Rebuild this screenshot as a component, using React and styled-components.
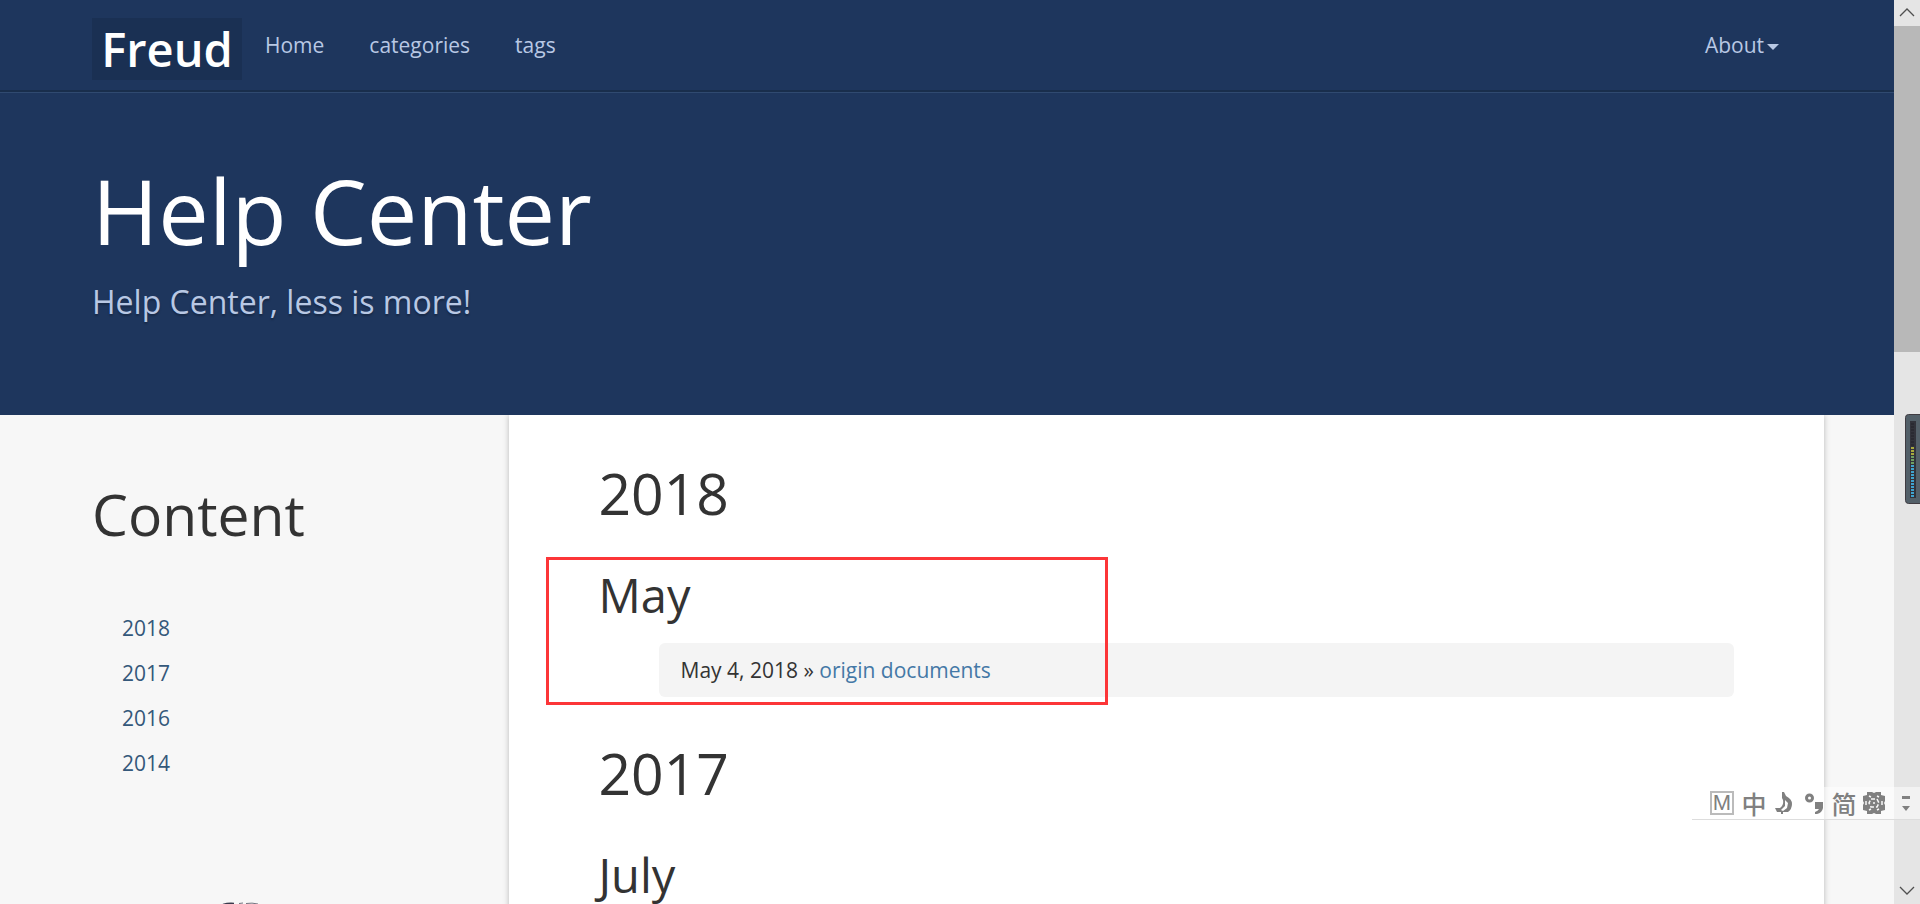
import React from "react";
import styled, { createGlobalStyle } from "styled-components";

const Global = createGlobalStyle`
  * { box-sizing: border-box; }
  body { margin: 0; background: #f7f7f7; color: #333; font: 21px/30px "Open Sans", "Noto Sans CJK SC", sans-serif; overflow: hidden; }
  h1, h2, h3, p, ul { margin: 0; padding: 0; font-weight: 400; }
  ul { list-style: none; }
  a { text-decoration: none; }
`;

const Shell = styled.div`
  position: relative;
  display: flex;
  height: 100vh;
  overflow: hidden;
`;
const Page = styled.div`
  flex: 1;
  min-width: 0;
  overflow: hidden;
`;
const Container = styled.div`
  max-width: 1754px;
  margin: 0 auto;
  padding: ${(p) => (p.$flush ? "0" : "0 22px")};
`;
const Top = styled.header`
  position: relative;
  z-index: 1;
  padding-bottom: 90px;
  background: #1e365d;
`;
const NavBar = styled.nav`
  border-bottom: 1px solid #304a70;
  box-shadow: inset 0 -2px 0 #192e4c;
`;
const NavRow = styled(Container)`
  display: flex;
  align-items: flex-start;
  padding-bottom: 12px;
`;
const Logo = styled.a`
  width: 150px;
  height: 62px;
  margin-top: 18px;
  background: #1a3053;
  color: #fff;
  font-weight: 600;
  font-size: 47px;
  line-height: 62px;
  text-align: center;
`;
const NavLink = styled.a`
  padding: 30px 22px 0 23px;
  color: #b8c8e4;
`;
const Menu = styled.button`
  display: flex;
  align-items: center;
  margin-left: auto;
  padding: 30px 23px 0;
  border: 0;
  background: none;
  color: #b8c8e4;
  font: inherit;
`;
const Caret = styled.span`
  margin: 4px 0 0 3px;
  border: 6px solid transparent;
  border-top-color: currentColor;
  border-bottom: 0;
`;
const Title = styled.h1`
  padding-top: 72px;
  color: #fff;
  font-size: 90px;
  line-height: 90px;
`;
const Lead = styled.p`
  padding-top: 24px;
  color: #b8c8e4;
  font-size: 32px;
  line-height: 46px;
  text-shadow: 0 2px 2px rgba(0, 0, 0, 0.25);
`;
const Columns = styled(Container)`
  display: grid;
  grid-template-columns: 1fr 3fr;
`;
const Sidebar = styled.aside`
  padding: 63px 22px 0;
`;
const Heading = styled.h2`
  font-size: 57px;
  line-height: 72px;
`;
const Years = styled.ul`
  padding: 56px 0 0 30px;
`;
const YearLink = styled.a`
  display: block;
  color: #34587a;
  line-height: 45px;
`;
const Portrait = styled.svg`
  display: block;
  margin: 116px 0 0 128px;
`;
const Main = styled.main`
  padding: 42px 90px 90px;
  background: #fff;
  box-shadow: 0 0 6px rgba(0, 0, 0, 0.25);
`;
const Month = styled.h3`
  padding-top: 36px;
  font-size: 47px;
  line-height: 60px;
`;
const Marked = styled.section`
  position: relative;
`;
const Outline = styled.span`
  position: absolute;
  top: 28px;
  left: -53px;
  width: 562px;
  height: 148px;
  border: 3px solid #fc3538;
`;
const Entry = styled.p`
  margin: 18px 0 40px 60px;
  padding: 12px 22px;
  border-radius: 6px;
  background: #f4f4f4;
  a { color: #4478a6; }
`;
const ScrollBar = styled.div`
  display: flex;
  flex-direction: column;
  justify-content: space-between;
  width: 26px;
  background: #e5e5e5;
`;
const Thumb = styled.div`
  height: 326px;
  background: #b8b8b8;
`;
const Arrow = styled.svg`
  display: block;
  width: 26px;
  height: 26px;
  fill: none;
  stroke: #505050;
  stroke-width: 1.3;
`;
const Meter = styled.svg`
  position: absolute;
  right: 0;
  top: 414px;
`;
const InputBar = styled.div`
  position: absolute;
  z-index: 2;
  right: 0;
  bottom: 84px;
  display: flex;
  width: 228px;
  height: 33px;
  padding-left: 6px;
  background: rgba(255, 255, 255, 0.5);
  border-bottom: 1px solid #ddd;
`;
const Grip = styled.span`
  width: 3px;
  margin: 2px 7px 0 0;
  background: repeating-linear-gradient(#d8d8d8 0 3px, transparent 3px 6px);
`;
const Tool = styled.button`
  display: flex;
  flex: none;
  align-items: center;
  justify-content: center;
  width: ${(p) => p.$width || 30}px;
  padding: 0;
  border: 0;
  background: none;
  color: #808080;
  font: 500 25px/32px "Noto Sans CJK SC", sans-serif;
`;
const Boxed = styled.span`
  width: 24px;
  height: 24px;
  border: 2px solid #bbb;
  font: 22px/20px "Liberation Sans", sans-serif;
`;

const YEARS = ["2018", "2017", "2016", "2014"];
const lamp = (i) => (i < 8 ? "#2a2a32" : i < 11 ? "#a9a93c" : i < 14 ? "#6f9f62" : "#3fa3cf");

export default function App() {
  return (
    <Shell>
      <Global />
      <Page>
        <Top>
          <NavBar>
            <NavRow>
              <Logo href="#">Freud</Logo>
              <NavLink href="#">Home</NavLink>
              <NavLink href="#">categories</NavLink>
              <NavLink href="#">tags</NavLink>
              <Menu>About<Caret /></Menu>
            </NavRow>
          </NavBar>
          <Container>
            <Title>Help Center</Title>
            <Lead>Help Center, less is more!</Lead>
          </Container>
        </Top>
        <Columns $flush>
          <Sidebar>
            <Heading>Content</Heading>
            <Years>
              {YEARS.map((y) => <li key={y}><YearLink href={"#" + y}>{y}</YearLink></li>)}
            </Years>
            <Portrait width="44" height="40" viewBox="0 0 44 40" fill="none" stroke="#3a3a4c">
              <path d="M3 2.500Q8 1 14 1.500" strokeWidth="1.500" />
              <path d="M19 1.500L23 1M26 1.500Q32 .5 38 2" strokeWidth="1" opacity=".7" />
            </Portrait>
          </Sidebar>
          <Main>
            <Heading>2018</Heading>
            <Marked>
              <Month>May</Month>
              <Entry>May 4, 2018 » <a href="#">origin documents</a></Entry>
              <Outline />
            </Marked>
            <Heading>2017</Heading>
            <Month>July</Month>
          </Main>
        </Columns>
      </Page>
      <ScrollBar>
        <div>
          <Arrow viewBox="0 0 26 26"><path d="M6 16l7-7 7 7" /></Arrow>
          <Thumb />
        </div>
        <Arrow viewBox="0 0 26 26"><path d="M6 9l7 7 7-7" /></Arrow>
      </ScrollBar>
      <Meter width="15" height="90" viewBox="0 0 15 90">
        <rect x="0.5" y="0.5" width="18" height="89" rx="3" fill="#536069" stroke="#403c42" />
        <rect x="5" y="7" width="6" height="77" fill="#32333b" />
        {Array.from({ length: 25 }, (_, i) => (
          <rect key={i} x="6" y={9 + i * 3} width="3" height="2" fill={lamp(i)} />
        ))}
      </Meter>
      <InputBar>
        <Grip />
        <Tool $width={34}><Boxed>M</Boxed></Tool>
        <Tool>中</Tool>
        <Tool aria-label="Half width">
          <svg width="20" height="24" viewBox="0 0 20 24" fill="#808080">
            <path d="M8 1h2l2 4q6 3 6 8 0 5-4 8H9v2H7v-2H3l-2-4h5q4-3 3-8L8 7z" />
            <path d="M11 9l3 3-1 5-4 3-2-1 4-4z" fill="#fff" />
          </svg>
        </Tool>
        <Tool aria-label="Punctuation">
          <svg width="20" height="24" viewBox="0 0 20 24">
            <circle cx="5.500" cy="7" r="3" fill="none" stroke="#808080" strokeWidth="3" />
            <path d="M11 11h8v6q-1 5-6 6h-2v-2q3-1 4-3h-4z" fill="#808080" />
          </svg>
        </Tool>
        <Tool>简</Tool>
        <Tool aria-label="Settings">
          <svg width="24" height="24" viewBox="0 0 24 24" fill="#808080">
            <path d="M5 1h5l2 1 2-1h5v3l4 1v5l-1 2 1 2v5l-4 1v3h-5l-2-1-2 1H5v-3l-4-1v-5l1-2-1-2V5l4-1z" />
            <g fill="none" stroke="#f8f8f8" strokeWidth="1.500">
              <path d="M9 8h6l2 4-2 4H9l-2-4z" strokeDasharray="4 2" />
              <path d="M7 5l2 1M15 5l2 1M4 10v4M20 10v4M7 19l2-1M15 19l2-1" />
            </g>
            <circle cx="12" cy="12" r="1" fill="#f8f8f8" />
          </svg>
        </Tool>
        <Tool $width={34} aria-label="More">
          <svg width="10" height="18" viewBox="0 0 10 18" fill="#808080">
            <path d="M1 2h8v3H1zM1 12h8l-4 5z" />
          </svg>
        </Tool>
      </InputBar>
    </Shell>
  );
}
